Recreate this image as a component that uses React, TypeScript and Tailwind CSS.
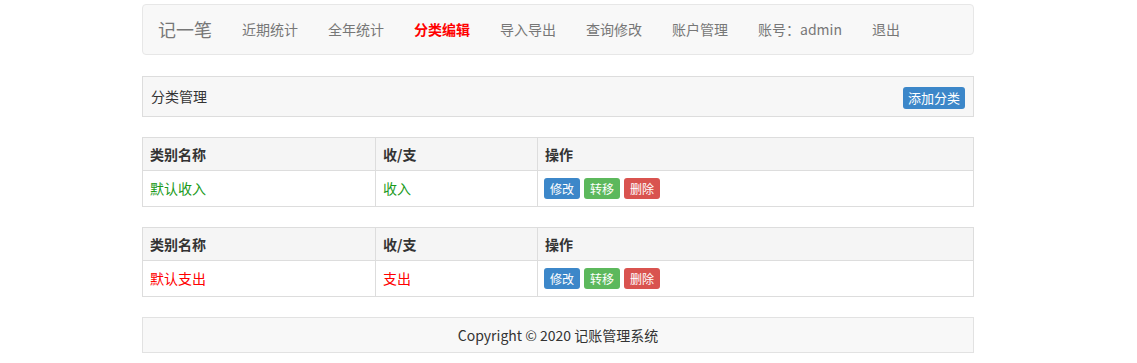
import React from "react";

const font = { fontFamily: '"Noto Sans CJK SC", "Open Sans", sans-serif' };

const navLinks = ["近期统计", "全年统计", "分类编辑", "导入导出", "查询修改", "账户管理", "账号：admin", "退出"];

const Btn: React.FC<{ color: string; children: React.ReactNode }> = ({ color, children }) => (
  <span className={`inline-flex h-[21px] items-center rounded-[3px] px-[6px] text-[12px] leading-none text-white ${color}`}>
    {children}
  </span>
);

const CategoryTable: React.FC<{ name: string; kind: string; tone: string }> = ({ name, kind, tone }) => (
  <table className="w-full border-collapse border border-[#ddd] text-[14px] text-[#333]">
    <thead>
      <tr className="h-[33px] bg-[#f5f5f5]">
        <th className="w-[233px] border border-[#ddd] px-[7px] text-left font-bold">类别名称</th>
        <th className="w-[162px] border border-[#ddd] px-[7px] text-left font-bold">收/支</th>
        <th className="border border-[#ddd] px-[7px] text-left font-bold">操作</th>
      </tr>
    </thead>
    <tbody>
      <tr className="h-[36px]">
        <td className={`border border-[#ddd] px-[7px] ${tone}`}>{name}</td>
        <td className={`border border-[#ddd] px-[7px] ${tone}`}>{kind}</td>
        <td className="border border-[#ddd] px-[6px]">
          <div className="flex gap-[4px]">
            <Btn color="bg-[#3c87c9]">修改</Btn>
            <Btn color="bg-[#5cb85c]">转移</Btn>
            <Btn color="bg-[#d9534f]">删除</Btn>
          </div>
        </td>
      </tr>
    </tbody>
  </table>
);

export default function App() {
  return (
    <div className="min-h-screen bg-white pt-[4px]" style={font}>
      <div className="ml-[142px] w-[832px]">
        {/* Navbar */}
        <nav className="flex h-[51px] items-center rounded-[4px] border border-[#e7e7e7] bg-[#f8f8f8] px-[15px]">
          <span className="mr-[15px] text-[18px] text-[#777]">记一笔</span>
          {navLinks.map((link) => (
            <span
              key={link}
              className={`px-[15px] text-[14px] ${link === "分类编辑" ? "font-bold text-[#f00]" : "text-[#777]"}`}
            >
              {link}
            </span>
          ))}
        </nav>

        {/* Panel */}
        <div className="mt-[21px] flex h-[41px] items-center justify-between border border-[#ddd] bg-[#f7f7f7] pl-[8px] pr-[8px]">
          <span className="text-[14px] text-[#333]">分类管理</span>
          <span className="mt-[2px] inline-flex h-[22px] items-center rounded-[3px] bg-[#3c87c9] px-[5px] text-[13px] text-white">
            添加分类
          </span>
        </div>

        <div className="mt-[20px]">
          <CategoryTable name="默认收入" kind="收入" tone="text-[#1a9a1a]" />
        </div>
        <div className="mt-[20px]">
          <CategoryTable name="默认支出" kind="支出" tone="text-[#f00]" />
        </div>

        {/* Footer */}
        <footer className="mt-[20px] flex h-[36px] items-center justify-center border border-[#e2e2e2] bg-[#f8f8f8] text-[14px] text-[#333]">
          Copyright © 2020 记账管理系统
        </footer>
      </div>
    </div>
  );
}
